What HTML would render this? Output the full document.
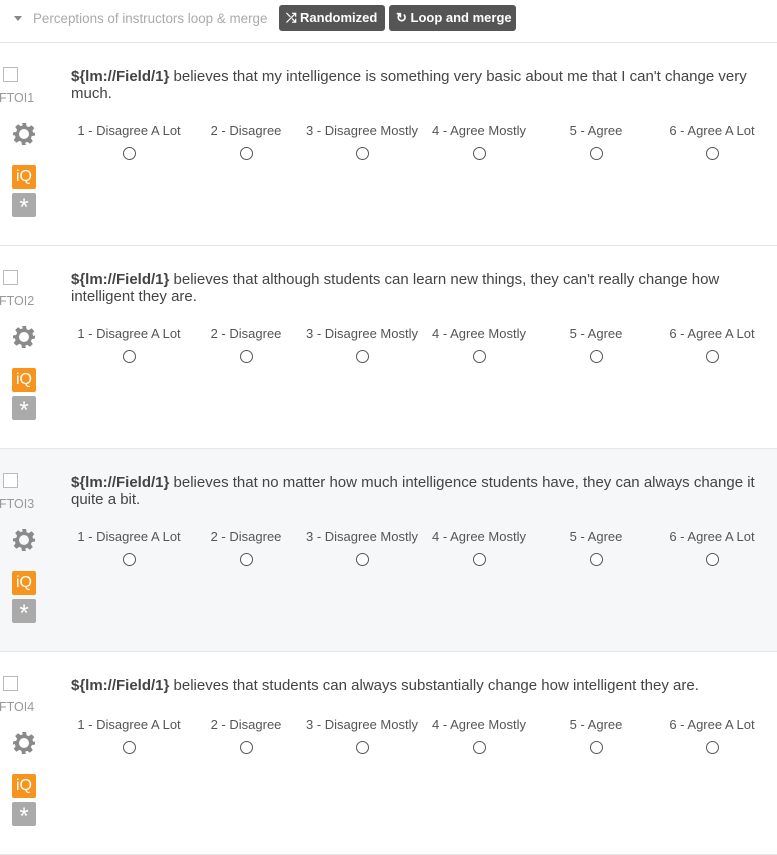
<!DOCTYPE html>
<html><head><style>
*{margin:0;padding:0;box-sizing:border-box}
body{width:777px;height:835px;overflow:hidden;background:#fff;font-family:"Liberation Sans",sans-serif;color:#444;position:relative}
.hdr{position:absolute;left:0;top:0;width:777px;height:43px;border-bottom:1px solid #e6e6e6}
.tri{position:absolute;left:14px;top:16px;width:0;height:0;border-left:4px solid transparent;border-right:4px solid transparent;border-top:5px solid #888}
.ttl{position:absolute;left:33px;top:11px;font-size:13.4px;color:#aaa;white-space:nowrap}
.btn{position:absolute;top:5px;height:26px;background:#555;color:#fff;border-radius:3px;font-size:13px;font-weight:bold;line-height:26px;padding-left:7px;white-space:nowrap}
.q{position:absolute;left:0;width:777px;height:203px;border-bottom:1px solid #e6e6e6}
.cb{position:absolute;left:3px;top:24px;width:15px;height:15px;border:1px solid #bbb;background:#fff}
.id{position:absolute;left:-1px;top:48px;font-size:12.5px;color:#999}
.gear{position:absolute;left:12px;top:79px}
.iq{position:absolute;left:12px;top:122px;width:24px;height:24px;background:#f7941d;border-radius:2px;color:#fff;font-size:16px;text-align:center;line-height:24px}
.ast{position:absolute;left:12px;top:150px;width:24px;height:24px;background:#aaa;border-radius:2px;color:#fff;font-size:24px;text-align:center;line-height:30px}
.txt{position:absolute;left:71px;top:25px;width:692px;font-size:15px;line-height:17px;color:#444}
.lab{position:absolute;width:130px;margin-left:-65px;text-align:center;font-size:13px;color:#555;white-space:nowrap}
.rad{position:absolute;width:13px;height:13px;margin-left:-6.5px;border:1px solid #555;border-radius:50%;background:#fff}
</style></head><body>
<div class="hdr">
<div class="tri"></div>
<div class="ttl">Perceptions of instructors loop &amp; merge</div>
<div class="btn" style="left:279px;width:106px">⤮ Randomized</div>
<div class="btn" style="left:389px;width:127px">↻ Loop and merge</div>
</div>
<div id="qs"></div>
<script>
var qs=[["FTOI1","believes that my intelligence is something very basic about me that I can't change very much.",43,87,'#fff'],
["FTOI2","believes that although students can learn new things, they can't really change how intelligent they are.",246,87,'#fff'],
["FTOI3","believes that no matter how much intelligence students have, they can always change it quite a bit.",449,87,'#f6f7f9'],
["FTOI4","believes that students can always substantially change how intelligent they are.",652,72,'#fff']];
var labs=["1 - Disagree A Lot","2 - Disagree","3 - Disagree Mostly","4 - Agree Mostly","5 - Agree","6 - Agree A Lot"];
var xs=[129,246,362,479,596,712];
var h='';
qs.forEach(function(q){
h+='<div class="q" style="top:'+q[2]+'px;background:'+q[4]+'"><div class="cb"></div><div class="id">'+q[0]+'</div>'+
'<svg class="gear" width="24" height="24" viewBox="0 0 24 24"><path fill="#8a8a8a" d="M10 1h4l.6 3.2 2.2.9 2.7-1.9 2.8 2.8-1.9 2.7.9 2.2L23 10.5v3l-3.2.6-.9 2.2 1.9 2.7-2.8 2.8-2.7-1.9-2.2.9L14 23h-4l-.6-3.2-2.2-.9-2.7 1.9-2.8-2.8 1.9-2.7-.9-2.2L1 13.5v-3l3.2-.6.9-2.2-1.9-2.7 2.8-2.8 2.7 1.9 2.2-.9z"/><circle cx="12" cy="12" r="5" fill="'+q[4]+'"/></svg>'+
'<div class="iq">iQ</div><div class="ast">*</div>'+
'<div class="txt"><b>${lm://Field/1}</b> '+q[1]+'</div>';
for(var i=0;i<6;i++){h+='<div class="lab" style="left:'+xs[i]+'px;top:'+(q[3]-7)+'px">'+labs[i]+'</div><div class="rad" style="left:'+xs[i]+'px;top:'+(q[3]+17)+'px"></div>';}
h+='</div>';});
document.getElementById('qs').innerHTML=h;
</script>
</body></html>
